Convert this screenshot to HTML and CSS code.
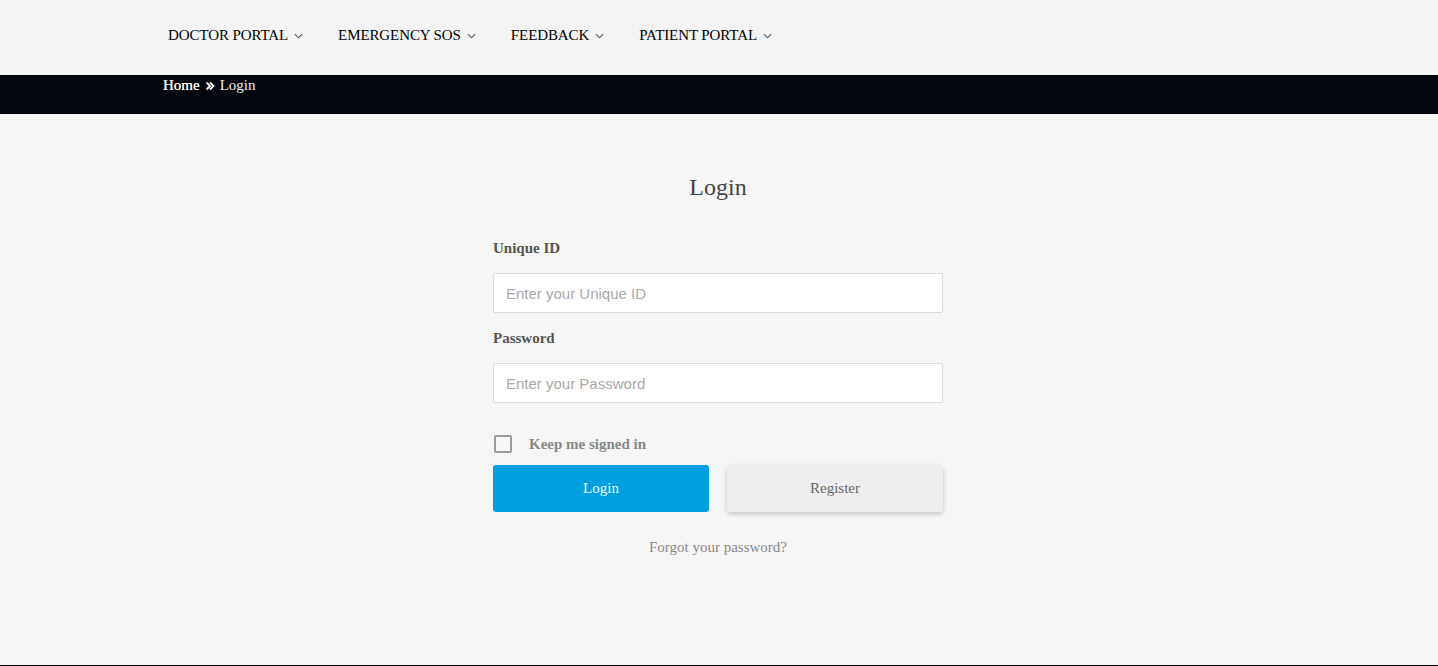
FILE: index.html
```html
<!DOCTYPE html>
<html lang="en">
<head>
<meta charset="utf-8">
<title>Login</title>
<link rel="stylesheet" href="styles.css">
</head>
<body>
<header class="topbar">
  <nav class="nav">
    <a class="nav-item" href="#">DOCTOR PORTAL <svg class="chev" viewBox="0 0 10 6" width="9" height="6"><path d="M1 1l4 4 4-4" fill="none" stroke="currentColor" stroke-width="1.2"/></svg></a>
    <a class="nav-item" href="#">EMERGENCY SOS <svg class="chev" viewBox="0 0 10 6" width="9" height="6"><path d="M1 1l4 4 4-4" fill="none" stroke="currentColor" stroke-width="1.2"/></svg></a>
    <a class="nav-item" href="#">FEEDBACK <svg class="chev" viewBox="0 0 10 6" width="9" height="6"><path d="M1 1l4 4 4-4" fill="none" stroke="currentColor" stroke-width="1.2"/></svg></a>
    <a class="nav-item" href="#">PATIENT PORTAL <svg class="chev" viewBox="0 0 10 6" width="9" height="6"><path d="M1 1l4 4 4-4" fill="none" stroke="currentColor" stroke-width="1.2"/></svg></a>
  </nav>
</header>
<div class="crumbbar">
  <div class="crumbs">
    <a class="crumb-home" href="#">Home</a>
    <svg class="crumb-sep" viewBox="0 0 10 10" width="10" height="10"><path d="M1.5 1.5l3.5 3.5-3.5 3.5M5 1.5l3.5 3.5-3.5 3.5" fill="none" stroke="#fff" stroke-width="1.8"/></svg>
    <span class="crumb-current">Login</span>
  </div>
</div>
<main class="main">
  <form class="login">
    <h1 class="title">Login</h1>
    <label class="label" for="uid">Unique ID</label>
    <input class="field" id="uid" type="text" placeholder="Enter your Unique ID">
    <label class="label label-pw" for="pw">Password</label>
    <input class="field" id="pw" type="password" placeholder="Enter your Password">
    <label class="keep"><span class="box"></span><span class="keep-text">Keep me signed in</span></label>
    <div class="buttons">
      <button type="button" class="btn btn-primary">Login</button>
      <button type="button" class="btn btn-secondary">Register</button>
    </div>
    <a class="forgot" href="#">Forgot your password?</a>
  </form>
</main>
</body>
</html>
```
FILE: styles.css
```css
* { box-sizing: border-box; }
html, body { margin: 0; padding: 0; }
body {
  background: #f6f6f6;
  font-family: "Liberation Serif", "Times New Roman", serif;
  color: #333;
  height: 666px;
  border-bottom: 1px solid #000;
  overflow: hidden;
}
a { text-decoration: none; }
.topbar {
  background: #f4f4f4;
  height: 75px;
}
.nav {
  display: flex;
  align-items: center;
  height: 70px;
  padding-left: 168px;
  gap: 35px;
}
.nav-item {
  color: #000;
  font-size: 15px;
  display: flex;
  align-items: center;
  gap: 6px;
  letter-spacing: -0.1px;
}
.chev { color: #555; margin-top: 1px; }
.crumbbar {
  background: #03060d;
  height: 39px;
}
.crumbs {
  padding-left: 163px;
  padding-top: 1px;
  display: flex;
  align-items: center;
  gap: 5px;
  font-size: 15px;
  line-height: 18px;
}
.crumb-home { color: #fff; font-weight: normal; text-shadow: 0 0 0.4px #fff; }
.crumb-sep { margin-top: 1px; }
.crumb-current { color: #f0f0f0; }
.main {
  display: flex;
  justify-content: center;
  padding-right: 2px;
}
.login {
  width: 450px;
  display: flex;
  flex-direction: column;
}
.title {
  margin: 59px 0 0;
  text-align: center;
  font-weight: normal;
  font-size: 24px;
  line-height: 28px;
  color: #444;
}
.label {
  margin-top: 37px;
  font-size: 15px;
  line-height: 20px;
  font-weight: bold;
  color: #555;
}
.label-pw { margin-top: 15px; }
.field {
  margin-top: 15px;
  height: 40px;
  border: 1px solid #dcdcdc;
  border-radius: 2px;
  background: #fff;
  padding: 0 12px;
  font-family: "Liberation Sans", Arial, sans-serif;
  font-size: 15px;
  color: #333;
  outline: none;
}
.field::placeholder { color: #a9a9a9; }
.keep {
  margin-top: 31px;
  display: flex;
  align-items: center;
  height: 20px;
}
.box {
  width: 18px;
  height: 18px;
  border: 2px solid #9a9a9a;
  border-radius: 2px;
  margin-left: 1px;
}
.keep-text {
  margin-left: 17px;
  font-size: 15px;
  font-weight: bold;
  color: #888;
}
.buttons {
  margin-top: 11px;
  display: flex;
  gap: 18px;
}
.btn {
  flex: 1;
  height: 47px;
  border: none;
  border-radius: 3px;
  font-family: "Liberation Serif", "Times New Roman", serif;
  font-size: 15px;
  cursor: pointer;
}
.btn-primary {
  background: #009fe0;
  color: #fff;
}
.btn-secondary {
  background: #eeeeee;
  color: #666;
  box-shadow: 0 2px 5px rgba(0,0,0,0.2);
}
.forgot {
  margin-top: 27px;
  text-align: center;
  font-size: 15px;
  color: #888;
}
```
